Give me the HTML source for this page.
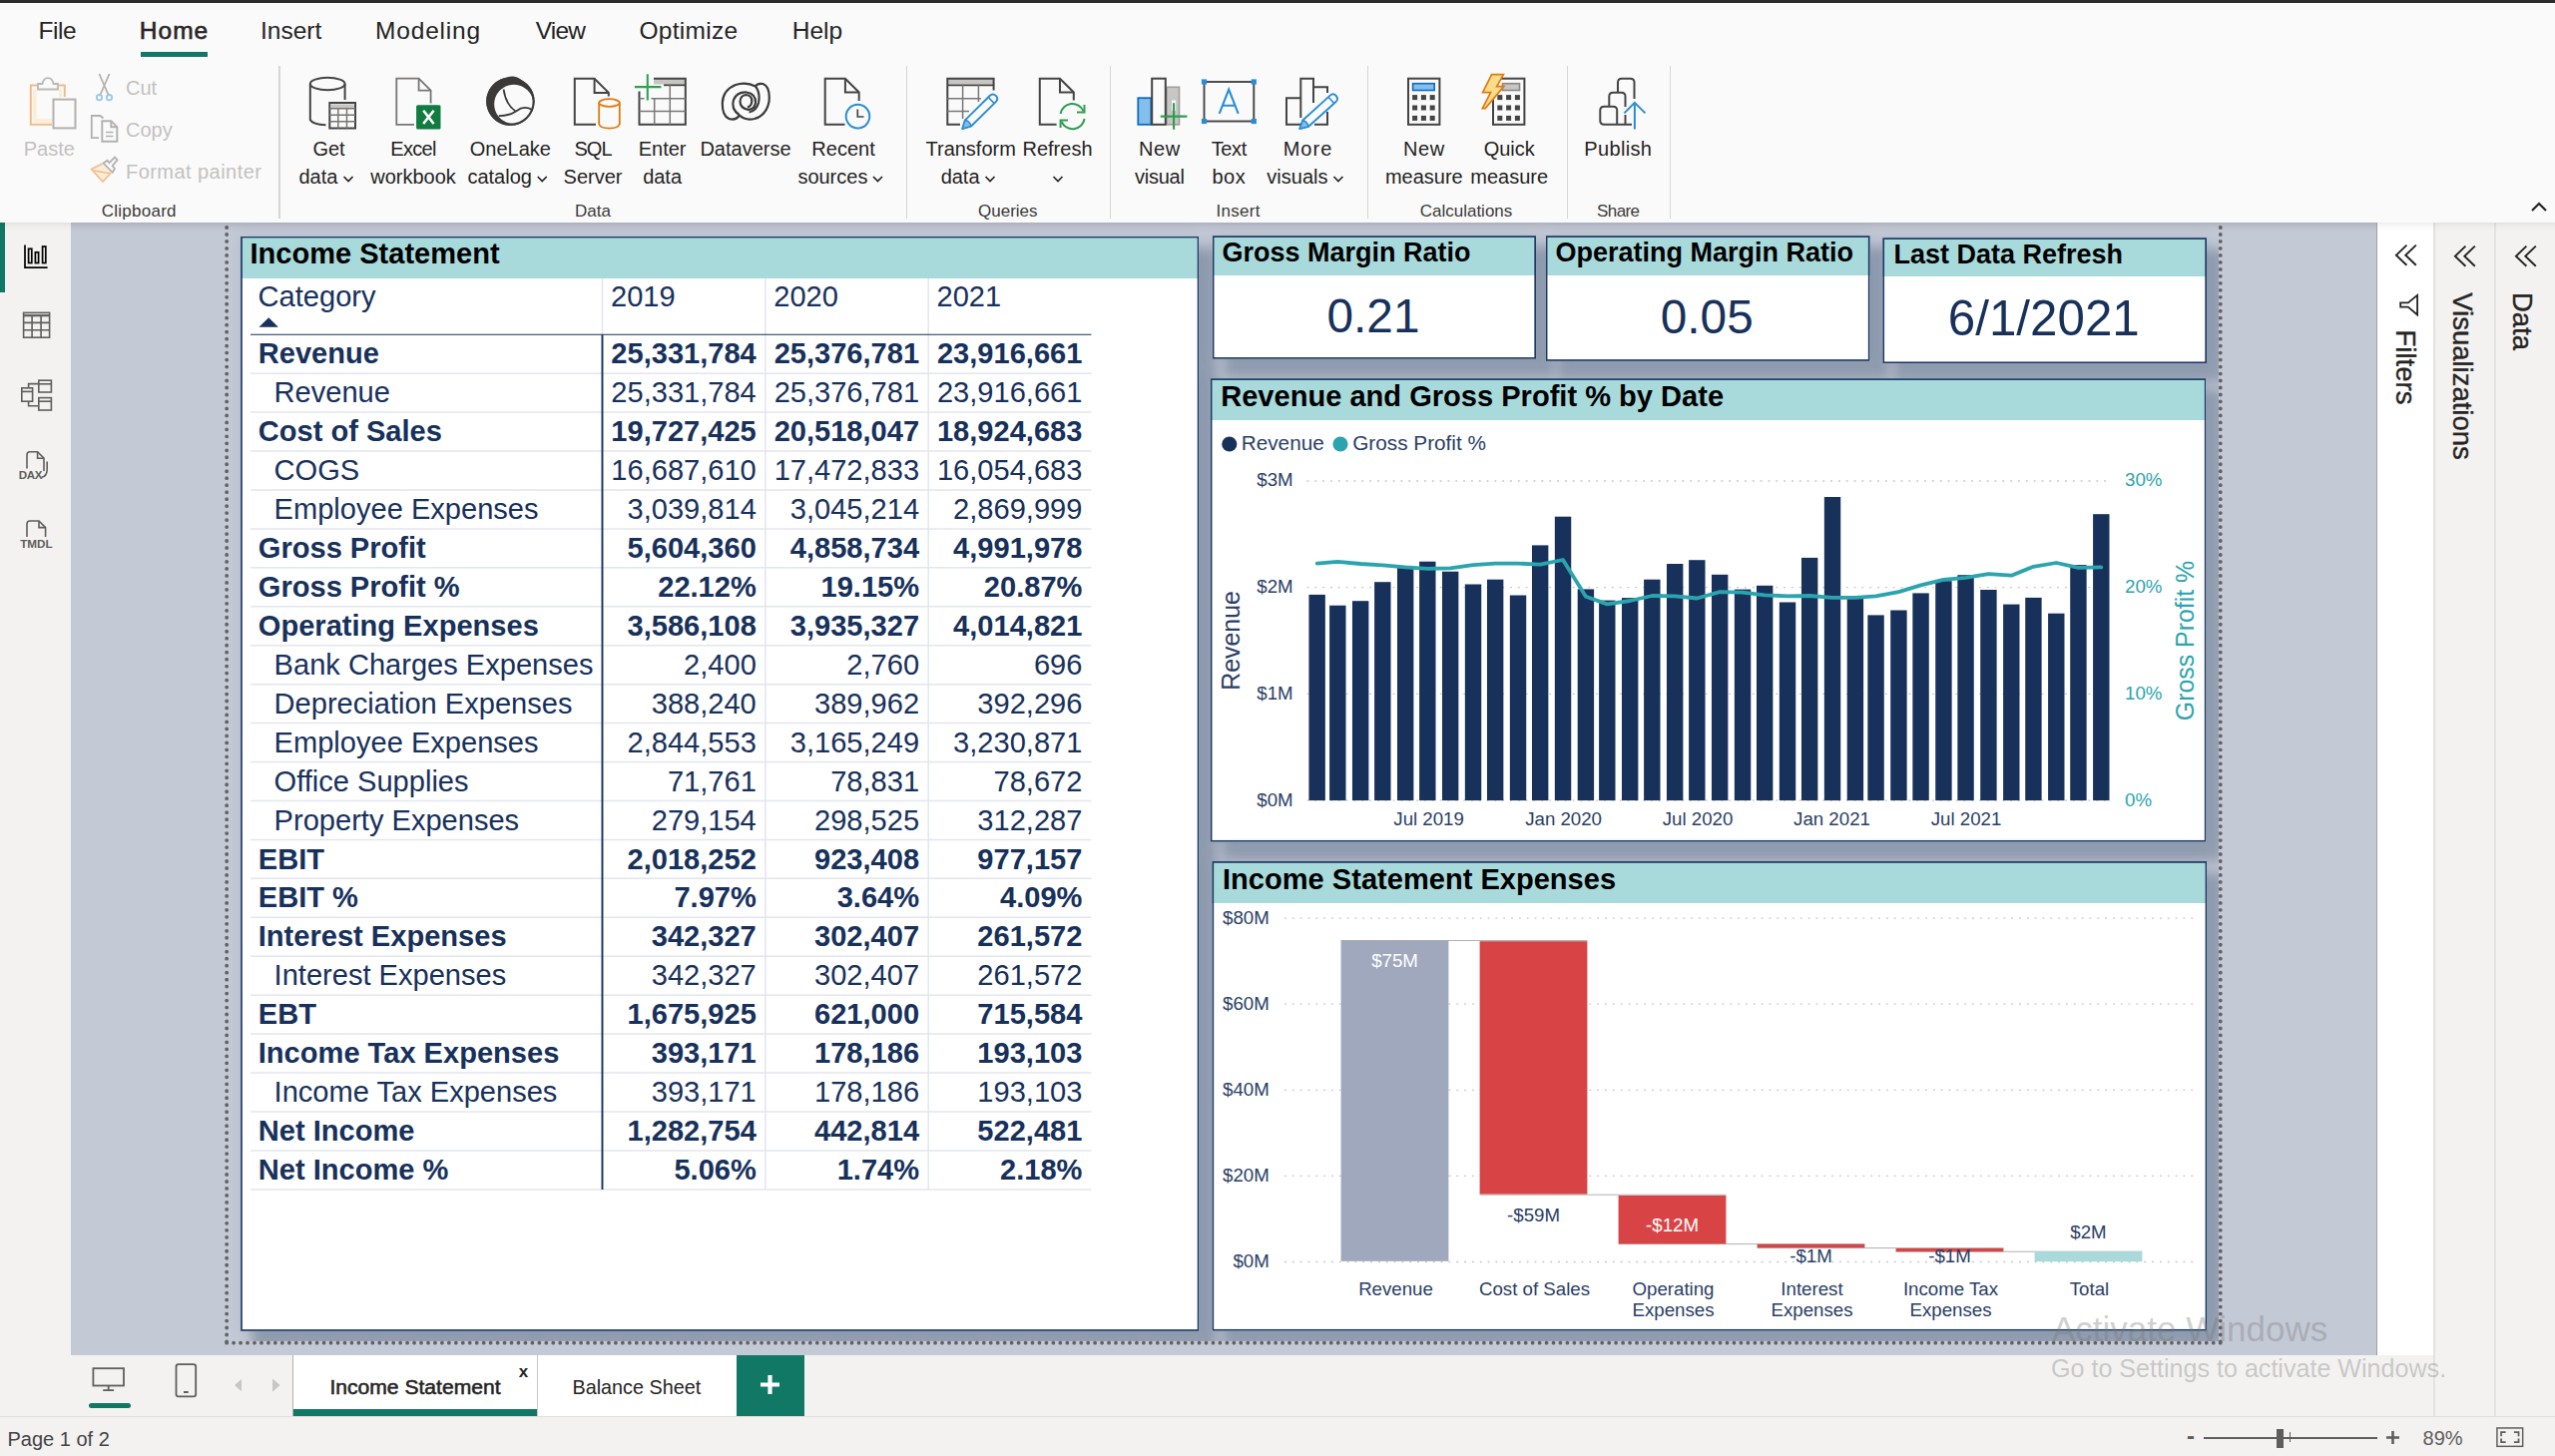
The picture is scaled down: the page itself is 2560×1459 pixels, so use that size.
<!DOCTYPE html><html><head><meta charset="utf-8"><title>Power BI</title><style>
*{box-sizing:border-box;margin:0;padding:0}
html,body{width:2560px;height:1459px;overflow:hidden;background:#f3f2f1;font-family:"Liberation Sans",sans-serif;color:#252423}
.abs{position:absolute}
.t{position:absolute;white-space:nowrap;line-height:1}
#topbar{left:0;top:0;width:2560px;height:3px;background:#2b2b2b}
#ribbon{left:0;top:3px;width:2560px;height:220px;background:#fafafa}
#leftnav{left:0;top:223px;width:71px;height:1196px;background:#f3f2f1}
#canvas{left:71px;top:223px;width:2311px;height:1135px;background:#c4c9d6;overflow:hidden}
#ribshadow{left:71px;top:223px;width:2311px;height:10px;background:linear-gradient(to bottom,rgba(0,0,0,.125),rgba(0,0,0,.045) 42%,rgba(0,0,0,0))}
.ribshadow2{top:223px;height:9px;background:linear-gradient(to bottom,rgba(0,0,0,.065),rgba(0,0,0,.02) 45%,rgba(0,0,0,0))}
#page{left:229px;top:223px;width:1994px;height:1121px;overflow:hidden}
.vis{position:absolute;background:#fff;box-shadow:14.5px 14.5px 11px 4px rgba(96,113,140,.5),0 0 12px 1px rgba(96,113,140,.13)}
.vt{position:absolute;left:0;top:0;right:0;background:#a8dadc}
.vtt{position:absolute;white-space:nowrap;line-height:1;font-weight:bold;color:#000}
.sep{position:absolute;top:66px;width:2px;height:153px;background:#d8d8d8}
.tab{position:absolute;white-space:nowrap;line-height:1;font-size:24.5px;top:19px;color:#252423}
.rl{position:absolute;white-space:nowrap;line-height:1;font-size:20px;color:#252423;text-align:center;transform:translateX(-50%)}
.gl{position:absolute;white-space:nowrap;line-height:1;font-size:17px;color:#444;top:203px;transform:translateX(-50%)}
.dis{color:#c8c6c4}
.navy{color:#1d3557}
</style></head><body>
<div id="canvas" class="abs"></div>
<div id="page" class="abs">
<div class="vis" style="left:12px;top:14px;width:960px;height:1097px"><div class="vt" style="height:41.8px"></div>
<div class="t" style="top:3.39px;font-size:29.07px;color:#000;font-weight:bold;left:9.40px;">Income Statement</div>
<div class="t" style="top:46.09px;font-size:29.07px;color:#17315b;left:17.60px;">Category</div>
<div class="t" style="top:46.09px;font-size:29.07px;color:#17315b;left:371.00px;">2019</div>
<div class="t" style="top:46.09px;font-size:29.07px;color:#17315b;left:534.30px;">2020</div>
<div class="t" style="top:46.09px;font-size:29.07px;color:#17315b;left:697.50px;">2021</div>
<svg class="abs" style="left:18px;top:80px" width="22" height="12" viewBox="0 0 22 12"><path d="M0.5 10.8 L10.2 1.2 L19.9 10.8Z" fill="#17315b"/></svg>
<svg class="abs" style="left:0;top:0" width="960" height="1097" viewBox="241 237 960 1097" fill="none"><line x1="603.5" x2="603.5" y1="279" y2="335.2" stroke="#e3e6ed" stroke-width="1.5"/><line x1="766.9" x2="766.9" y1="279" y2="1191.8799999999999" stroke="#e3e6ed" stroke-width="1.5"/><line x1="930.2" x2="930.2" y1="279" y2="1191.8799999999999" stroke="#e3e6ed" stroke-width="1.5"/><line x1="251" x2="1093.5" y1="374.14" y2="374.14" stroke="#e3e6ed" stroke-width="1.5"/><line x1="251" x2="1093.5" y1="413.08" y2="413.08" stroke="#e3e6ed" stroke-width="1.5"/><line x1="251" x2="1093.5" y1="452.02" y2="452.02" stroke="#e3e6ed" stroke-width="1.5"/><line x1="251" x2="1093.5" y1="490.96" y2="490.96" stroke="#e3e6ed" stroke-width="1.5"/><line x1="251" x2="1093.5" y1="529.90" y2="529.90" stroke="#e3e6ed" stroke-width="1.5"/><line x1="251" x2="1093.5" y1="568.84" y2="568.84" stroke="#e3e6ed" stroke-width="1.5"/><line x1="251" x2="1093.5" y1="607.78" y2="607.78" stroke="#e3e6ed" stroke-width="1.5"/><line x1="251" x2="1093.5" y1="646.72" y2="646.72" stroke="#e3e6ed" stroke-width="1.5"/><line x1="251" x2="1093.5" y1="685.66" y2="685.66" stroke="#e3e6ed" stroke-width="1.5"/><line x1="251" x2="1093.5" y1="724.60" y2="724.60" stroke="#e3e6ed" stroke-width="1.5"/><line x1="251" x2="1093.5" y1="763.54" y2="763.54" stroke="#e3e6ed" stroke-width="1.5"/><line x1="251" x2="1093.5" y1="802.48" y2="802.48" stroke="#e3e6ed" stroke-width="1.5"/><line x1="251" x2="1093.5" y1="841.42" y2="841.42" stroke="#e3e6ed" stroke-width="1.5"/><line x1="251" x2="1093.5" y1="880.36" y2="880.36" stroke="#e3e6ed" stroke-width="1.5"/><line x1="251" x2="1093.5" y1="919.30" y2="919.30" stroke="#e3e6ed" stroke-width="1.5"/><line x1="251" x2="1093.5" y1="958.24" y2="958.24" stroke="#e3e6ed" stroke-width="1.5"/><line x1="251" x2="1093.5" y1="997.18" y2="997.18" stroke="#e3e6ed" stroke-width="1.5"/><line x1="251" x2="1093.5" y1="1036.12" y2="1036.12" stroke="#e3e6ed" stroke-width="1.5"/><line x1="251" x2="1093.5" y1="1075.06" y2="1075.06" stroke="#e3e6ed" stroke-width="1.5"/><line x1="251" x2="1093.5" y1="1114.00" y2="1114.00" stroke="#e3e6ed" stroke-width="1.5"/><line x1="251" x2="1093.5" y1="1152.94" y2="1152.94" stroke="#e3e6ed" stroke-width="1.5"/><line x1="251" x2="1093.5" y1="1191.88" y2="1191.88" stroke="#e3e6ed" stroke-width="1.5"/><line x1="603.5" x2="603.5" y1="335.2" y2="1191.8799999999999" stroke="#17315b" stroke-width="1.9"/><line x1="251" x2="1093.5" y1="335.2" y2="335.2" stroke="#17315b" stroke-width="1.1"/></svg>
<div class="t" style="top:103.29px;font-size:29.07px;color:#17315b;font-weight:bold;left:17.80px;">Revenue</div>
<div class="t" style="top:103.29px;font-size:29.07px;color:#17315b;font-weight:bold;left:516.80px;transform:translateX(-100%);">25,331,784</div>
<div class="t" style="top:103.29px;font-size:29.07px;color:#17315b;font-weight:bold;left:680.10px;transform:translateX(-100%);">25,376,781</div>
<div class="t" style="top:103.29px;font-size:29.07px;color:#17315b;font-weight:bold;left:843.40px;transform:translateX(-100%);">23,916,661</div>
<div class="t" style="top:142.23px;font-size:29.07px;color:#17315b;left:33.60px;">Revenue</div>
<div class="t" style="top:142.23px;font-size:29.07px;color:#17315b;left:516.80px;transform:translateX(-100%);">25,331,784</div>
<div class="t" style="top:142.23px;font-size:29.07px;color:#17315b;left:680.10px;transform:translateX(-100%);">25,376,781</div>
<div class="t" style="top:142.23px;font-size:29.07px;color:#17315b;left:843.40px;transform:translateX(-100%);">23,916,661</div>
<div class="t" style="top:181.17px;font-size:29.07px;color:#17315b;font-weight:bold;left:17.80px;">Cost of Sales</div>
<div class="t" style="top:181.17px;font-size:29.07px;color:#17315b;font-weight:bold;left:516.80px;transform:translateX(-100%);">19,727,425</div>
<div class="t" style="top:181.17px;font-size:29.07px;color:#17315b;font-weight:bold;left:680.10px;transform:translateX(-100%);">20,518,047</div>
<div class="t" style="top:181.17px;font-size:29.07px;color:#17315b;font-weight:bold;left:843.40px;transform:translateX(-100%);">18,924,683</div>
<div class="t" style="top:220.11px;font-size:29.07px;color:#17315b;left:33.60px;">COGS</div>
<div class="t" style="top:220.11px;font-size:29.07px;color:#17315b;left:516.80px;transform:translateX(-100%);">16,687,610</div>
<div class="t" style="top:220.11px;font-size:29.07px;color:#17315b;left:680.10px;transform:translateX(-100%);">17,472,833</div>
<div class="t" style="top:220.11px;font-size:29.07px;color:#17315b;left:843.40px;transform:translateX(-100%);">16,054,683</div>
<div class="t" style="top:259.05px;font-size:29.07px;color:#17315b;left:33.60px;">Employee Expenses</div>
<div class="t" style="top:259.05px;font-size:29.07px;color:#17315b;left:516.80px;transform:translateX(-100%);">3,039,814</div>
<div class="t" style="top:259.05px;font-size:29.07px;color:#17315b;left:680.10px;transform:translateX(-100%);">3,045,214</div>
<div class="t" style="top:259.05px;font-size:29.07px;color:#17315b;left:843.40px;transform:translateX(-100%);">2,869,999</div>
<div class="t" style="top:297.99px;font-size:29.07px;color:#17315b;font-weight:bold;left:17.80px;">Gross Profit</div>
<div class="t" style="top:297.99px;font-size:29.07px;color:#17315b;font-weight:bold;left:516.80px;transform:translateX(-100%);">5,604,360</div>
<div class="t" style="top:297.99px;font-size:29.07px;color:#17315b;font-weight:bold;left:680.10px;transform:translateX(-100%);">4,858,734</div>
<div class="t" style="top:297.99px;font-size:29.07px;color:#17315b;font-weight:bold;left:843.40px;transform:translateX(-100%);">4,991,978</div>
<div class="t" style="top:336.93px;font-size:29.07px;color:#17315b;font-weight:bold;left:17.80px;">Gross Profit %</div>
<div class="t" style="top:336.93px;font-size:29.07px;color:#17315b;font-weight:bold;left:516.80px;transform:translateX(-100%);">22.12%</div>
<div class="t" style="top:336.93px;font-size:29.07px;color:#17315b;font-weight:bold;left:680.10px;transform:translateX(-100%);">19.15%</div>
<div class="t" style="top:336.93px;font-size:29.07px;color:#17315b;font-weight:bold;left:843.40px;transform:translateX(-100%);">20.87%</div>
<div class="t" style="top:375.87px;font-size:29.07px;color:#17315b;font-weight:bold;left:17.80px;">Operating Expenses</div>
<div class="t" style="top:375.87px;font-size:29.07px;color:#17315b;font-weight:bold;left:516.80px;transform:translateX(-100%);">3,586,108</div>
<div class="t" style="top:375.87px;font-size:29.07px;color:#17315b;font-weight:bold;left:680.10px;transform:translateX(-100%);">3,935,327</div>
<div class="t" style="top:375.87px;font-size:29.07px;color:#17315b;font-weight:bold;left:843.40px;transform:translateX(-100%);">4,014,821</div>
<div class="t" style="top:414.81px;font-size:29.07px;color:#17315b;left:33.60px;">Bank Charges Expenses</div>
<div class="t" style="top:414.81px;font-size:29.07px;color:#17315b;left:516.80px;transform:translateX(-100%);">2,400</div>
<div class="t" style="top:414.81px;font-size:29.07px;color:#17315b;left:680.10px;transform:translateX(-100%);">2,760</div>
<div class="t" style="top:414.81px;font-size:29.07px;color:#17315b;left:843.40px;transform:translateX(-100%);">696</div>
<div class="t" style="top:453.75px;font-size:29.07px;color:#17315b;left:33.60px;">Depreciation Expenses</div>
<div class="t" style="top:453.75px;font-size:29.07px;color:#17315b;left:516.80px;transform:translateX(-100%);">388,240</div>
<div class="t" style="top:453.75px;font-size:29.07px;color:#17315b;left:680.10px;transform:translateX(-100%);">389,962</div>
<div class="t" style="top:453.75px;font-size:29.07px;color:#17315b;left:843.40px;transform:translateX(-100%);">392,296</div>
<div class="t" style="top:492.69px;font-size:29.07px;color:#17315b;left:33.60px;">Employee Expenses</div>
<div class="t" style="top:492.69px;font-size:29.07px;color:#17315b;left:516.80px;transform:translateX(-100%);">2,844,553</div>
<div class="t" style="top:492.69px;font-size:29.07px;color:#17315b;left:680.10px;transform:translateX(-100%);">3,165,249</div>
<div class="t" style="top:492.69px;font-size:29.07px;color:#17315b;left:843.40px;transform:translateX(-100%);">3,230,871</div>
<div class="t" style="top:531.63px;font-size:29.07px;color:#17315b;left:33.60px;">Office Supplies</div>
<div class="t" style="top:531.63px;font-size:29.07px;color:#17315b;left:516.80px;transform:translateX(-100%);">71,761</div>
<div class="t" style="top:531.63px;font-size:29.07px;color:#17315b;left:680.10px;transform:translateX(-100%);">78,831</div>
<div class="t" style="top:531.63px;font-size:29.07px;color:#17315b;left:843.40px;transform:translateX(-100%);">78,672</div>
<div class="t" style="top:570.57px;font-size:29.07px;color:#17315b;left:33.60px;">Property Expenses</div>
<div class="t" style="top:570.57px;font-size:29.07px;color:#17315b;left:516.80px;transform:translateX(-100%);">279,154</div>
<div class="t" style="top:570.57px;font-size:29.07px;color:#17315b;left:680.10px;transform:translateX(-100%);">298,525</div>
<div class="t" style="top:570.57px;font-size:29.07px;color:#17315b;left:843.40px;transform:translateX(-100%);">312,287</div>
<div class="t" style="top:609.51px;font-size:29.07px;color:#17315b;font-weight:bold;left:17.80px;">EBIT</div>
<div class="t" style="top:609.51px;font-size:29.07px;color:#17315b;font-weight:bold;left:516.80px;transform:translateX(-100%);">2,018,252</div>
<div class="t" style="top:609.51px;font-size:29.07px;color:#17315b;font-weight:bold;left:680.10px;transform:translateX(-100%);">923,408</div>
<div class="t" style="top:609.51px;font-size:29.07px;color:#17315b;font-weight:bold;left:843.40px;transform:translateX(-100%);">977,157</div>
<div class="t" style="top:648.45px;font-size:29.07px;color:#17315b;font-weight:bold;left:17.80px;">EBIT %</div>
<div class="t" style="top:648.45px;font-size:29.07px;color:#17315b;font-weight:bold;left:516.80px;transform:translateX(-100%);">7.97%</div>
<div class="t" style="top:648.45px;font-size:29.07px;color:#17315b;font-weight:bold;left:680.10px;transform:translateX(-100%);">3.64%</div>
<div class="t" style="top:648.45px;font-size:29.07px;color:#17315b;font-weight:bold;left:843.40px;transform:translateX(-100%);">4.09%</div>
<div class="t" style="top:687.39px;font-size:29.07px;color:#17315b;font-weight:bold;left:17.80px;">Interest Expenses</div>
<div class="t" style="top:687.39px;font-size:29.07px;color:#17315b;font-weight:bold;left:516.80px;transform:translateX(-100%);">342,327</div>
<div class="t" style="top:687.39px;font-size:29.07px;color:#17315b;font-weight:bold;left:680.10px;transform:translateX(-100%);">302,407</div>
<div class="t" style="top:687.39px;font-size:29.07px;color:#17315b;font-weight:bold;left:843.40px;transform:translateX(-100%);">261,572</div>
<div class="t" style="top:726.33px;font-size:29.07px;color:#17315b;left:33.60px;">Interest Expenses</div>
<div class="t" style="top:726.33px;font-size:29.07px;color:#17315b;left:516.80px;transform:translateX(-100%);">342,327</div>
<div class="t" style="top:726.33px;font-size:29.07px;color:#17315b;left:680.10px;transform:translateX(-100%);">302,407</div>
<div class="t" style="top:726.33px;font-size:29.07px;color:#17315b;left:843.40px;transform:translateX(-100%);">261,572</div>
<div class="t" style="top:765.27px;font-size:29.07px;color:#17315b;font-weight:bold;left:17.80px;">EBT</div>
<div class="t" style="top:765.27px;font-size:29.07px;color:#17315b;font-weight:bold;left:516.80px;transform:translateX(-100%);">1,675,925</div>
<div class="t" style="top:765.27px;font-size:29.07px;color:#17315b;font-weight:bold;left:680.10px;transform:translateX(-100%);">621,000</div>
<div class="t" style="top:765.27px;font-size:29.07px;color:#17315b;font-weight:bold;left:843.40px;transform:translateX(-100%);">715,584</div>
<div class="t" style="top:804.21px;font-size:29.07px;color:#17315b;font-weight:bold;left:17.80px;">Income Tax Expenses</div>
<div class="t" style="top:804.21px;font-size:29.07px;color:#17315b;font-weight:bold;left:516.80px;transform:translateX(-100%);">393,171</div>
<div class="t" style="top:804.21px;font-size:29.07px;color:#17315b;font-weight:bold;left:680.10px;transform:translateX(-100%);">178,186</div>
<div class="t" style="top:804.21px;font-size:29.07px;color:#17315b;font-weight:bold;left:843.40px;transform:translateX(-100%);">193,103</div>
<div class="t" style="top:843.15px;font-size:29.07px;color:#17315b;left:33.60px;">Income Tax Expenses</div>
<div class="t" style="top:843.15px;font-size:29.07px;color:#17315b;left:516.80px;transform:translateX(-100%);">393,171</div>
<div class="t" style="top:843.15px;font-size:29.07px;color:#17315b;left:680.10px;transform:translateX(-100%);">178,186</div>
<div class="t" style="top:843.15px;font-size:29.07px;color:#17315b;left:843.40px;transform:translateX(-100%);">193,103</div>
<div class="t" style="top:882.09px;font-size:29.07px;color:#17315b;font-weight:bold;left:17.80px;">Net Income</div>
<div class="t" style="top:882.09px;font-size:29.07px;color:#17315b;font-weight:bold;left:516.80px;transform:translateX(-100%);">1,282,754</div>
<div class="t" style="top:882.09px;font-size:29.07px;color:#17315b;font-weight:bold;left:680.10px;transform:translateX(-100%);">442,814</div>
<div class="t" style="top:882.09px;font-size:29.07px;color:#17315b;font-weight:bold;left:843.40px;transform:translateX(-100%);">522,481</div>
<div class="t" style="top:921.03px;font-size:29.07px;color:#17315b;font-weight:bold;left:17.80px;">Net Income %</div>
<div class="t" style="top:921.03px;font-size:29.07px;color:#17315b;font-weight:bold;left:516.80px;transform:translateX(-100%);">5.06%</div>
<div class="t" style="top:921.03px;font-size:29.07px;color:#17315b;font-weight:bold;left:680.10px;transform:translateX(-100%);">1.74%</div>
<div class="t" style="top:921.03px;font-size:29.07px;color:#17315b;font-weight:bold;left:843.40px;transform:translateX(-100%);">2.18%</div>
<svg class="abs" style="left:0;top:0" width="960" height="1097" viewBox="241 237 960 1097"><rect x="242.00" y="237.50" width="958.60" height="1095.50" fill="none" stroke="#1f3a63" stroke-width="1.72"/></svg></div>
<div class="vis" style="left:986px;top:13px;width:324px;height:124px"><div class="vt" style="height:39.6px"></div>
<div class="t" style="top:3.84px;font-size:27px;color:#000;font-weight:bold;left:9.50px;">Gross Margin Ratio</div>
<div class="t" style="top:56.98px;font-size:47.75px;color:#17315b;left:161.00px;transform:translateX(-50%);">0.21</div>
<svg class="abs" style="left:0;top:0" width="324" height="124" viewBox="1215 236 324 124"><rect x="1215.60" y="237.10" width="322.60" height="121.80" fill="none" stroke="#1f3a63" stroke-width="1.72"/></svg></div>
<div class="vis" style="left:1320px;top:13px;width:325px;height:126px"><div class="vt" style="height:39.6px"></div>
<div class="t" style="top:3.84px;font-size:27px;color:#000;font-weight:bold;left:9.50px;">Operating Margin Ratio</div>
<div class="t" style="top:57.98px;font-size:47.75px;color:#17315b;left:161.25px;transform:translateX(-50%);">0.05</div>
<svg class="abs" style="left:0;top:0" width="325" height="126" viewBox="1549 236 325 126"><rect x="1549.60" y="237.10" width="323.10" height="123.90" fill="none" stroke="#1f3a63" stroke-width="1.72"/></svg></div>
<div class="vis" style="left:1657px;top:15px;width:325px;height:126px"><div class="vt" style="height:39.3px"></div>
<div class="t" style="top:3.94px;font-size:27px;color:#000;font-weight:bold;left:11.50px;">Last Data Refresh</div>
<div class="t" style="top:56.27px;font-size:49.3px;color:#17315b;left:161.80px;transform:translateX(-50%);">6/1/2021</div>
<svg class="abs" style="left:0;top:0" width="325" height="126" viewBox="1886 238 325 126"><rect x="1887.20" y="239.10" width="323.00" height="124.20" fill="none" stroke="#1f3a63" stroke-width="1.72"/></svg></div>
<div class="vis" style="left:984px;top:156px;width:997px;height:465px"><div class="vt" style="height:42.3px"></div>
<div class="t" style="top:3.89px;font-size:29.07px;color:#000;font-weight:bold;left:10.20px;">Revenue and Gross Profit % by Date</div>
<svg class="abs" style="left:0;top:0" width="997" height="465" viewBox="1213 379 997 465"><circle cx="1231.8" cy="445" r="7.6" fill="#17315b"/><circle cx="1343" cy="445" r="7.6" fill="#2ba4ae"/><line x1="1309.5" x2="2114" y1="482" y2="482" stroke="#c8c8c8" stroke-width="1.3" stroke-dasharray="1.9 5.93"/><line x1="1309.5" x2="2114" y1="588.7" y2="588.7" stroke="#c8c8c8" stroke-width="1.3" stroke-dasharray="1.9 5.93"/><line x1="1309.5" x2="2114" y1="695.4" y2="695.4" stroke="#c8c8c8" stroke-width="1.3" stroke-dasharray="1.9 5.93"/><line x1="1309.5" x2="2114" y1="802.1" y2="802.1" stroke="#c8c8c8" stroke-width="1.3" stroke-dasharray="1.9 5.93"/><rect x="1311.45" y="595.9" width="16.4" height="206.2" fill="#17315b"/><rect x="1332.11" y="606.7" width="16.4" height="195.4" fill="#17315b"/><rect x="1354.97" y="602.2" width="16.4" height="199.9" fill="#17315b"/><rect x="1377.11" y="583.2" width="16.4" height="218.9" fill="#17315b"/><rect x="1399.97" y="567.8" width="16.4" height="234.3" fill="#17315b"/><rect x="1422.11" y="562.7" width="16.4" height="239.4" fill="#17315b"/><rect x="1444.97" y="572.7" width="16.4" height="229.4" fill="#17315b"/><rect x="1467.84" y="585.5" width="16.4" height="216.6" fill="#17315b"/><rect x="1489.97" y="580.7" width="16.4" height="221.4" fill="#17315b"/><rect x="1512.84" y="596.5" width="16.4" height="205.6" fill="#17315b"/><rect x="1534.97" y="546.4" width="16.4" height="255.7" fill="#17315b"/><rect x="1557.84" y="517.7" width="16.4" height="284.4" fill="#17315b"/><rect x="1580.71" y="590.4" width="16.4" height="211.7" fill="#17315b"/><rect x="1602.10" y="601.6" width="16.4" height="200.5" fill="#17315b"/><rect x="1624.97" y="599.1" width="16.4" height="203.0" fill="#17315b"/><rect x="1647.10" y="580.7" width="16.4" height="221.4" fill="#17315b"/><rect x="1669.97" y="565.0" width="16.4" height="237.1" fill="#17315b"/><rect x="1692.10" y="561.2" width="16.4" height="240.9" fill="#17315b"/><rect x="1714.97" y="575.8" width="16.4" height="226.3" fill="#17315b"/><rect x="1737.84" y="590.6" width="16.4" height="211.5" fill="#17315b"/><rect x="1759.97" y="586.8" width="16.4" height="215.3" fill="#17315b"/><rect x="1782.84" y="603.5" width="16.4" height="198.6" fill="#17315b"/><rect x="1804.97" y="558.9" width="16.4" height="243.2" fill="#17315b"/><rect x="1827.84" y="498.0" width="16.4" height="304.1" fill="#17315b"/><rect x="1850.71" y="598.8" width="16.4" height="203.3" fill="#17315b"/><rect x="1871.36" y="616.4" width="16.4" height="185.7" fill="#17315b"/><rect x="1894.23" y="611.5" width="16.4" height="190.6" fill="#17315b"/><rect x="1916.36" y="594.4" width="16.4" height="207.7" fill="#17315b"/><rect x="1939.23" y="582.2" width="16.4" height="219.9" fill="#17315b"/><rect x="1961.36" y="576.2" width="16.4" height="225.9" fill="#17315b"/><rect x="1984.23" y="591.0" width="16.4" height="211.1" fill="#17315b"/><rect x="2007.10" y="605.6" width="16.4" height="196.5" fill="#17315b"/><rect x="2029.23" y="598.9" width="16.4" height="203.2" fill="#17315b"/><rect x="2052.10" y="614.7" width="16.4" height="187.4" fill="#17315b"/><rect x="2074.23" y="566.1" width="16.4" height="236.0" fill="#17315b"/><rect x="2097.10" y="515.2" width="16.4" height="286.9" fill="#17315b"/><polyline points="1319.7,564.6 1340.3,562.9 1363.2,565.0 1385.3,566.3 1408.2,568.4 1430.3,569.9 1453.2,569.3 1476.0,566.1 1498.2,564.6 1521.0,564.6 1543.2,565.7 1566.0,561.0 1588.9,597.8 1610.3,605.4 1633.2,602.0 1655.3,597.0 1678.2,597.4 1700.3,599.5 1723.2,593.1 1746.0,593.6 1768.2,596.3 1791.0,597.4 1813.2,597.0 1836.0,598.9 1858.9,598.9 1879.6,597.4 1902.4,593.1 1924.6,586.4 1947.4,580.9 1969.6,578.8 1992.4,575.2 2015.3,576.7 2037.4,567.8 2060.3,564.0 2082.4,568.8 2105.3,568.4" fill="none" stroke="#2ba4ae" stroke-width="3.8" stroke-linejoin="round" stroke-linecap="round"/></svg>
<div class="t" style="top:54.63px;font-size:20.76px;color:#2a4066;left:30.70px;">Revenue</div>
<div class="t" style="top:54.63px;font-size:20.76px;color:#2a4066;left:142.20px;">Gross Profit %</div>
<div class="t" style="top:93.49px;font-size:18.68px;color:#2a4066;left:46.30px;">$3M</div>
<div class="t" style="top:93.49px;font-size:18.68px;color:#2ba4ae;left:916.00px;">30%</div>
<div class="t" style="top:200.19px;font-size:18.68px;color:#2a4066;left:46.30px;">$2M</div>
<div class="t" style="top:200.19px;font-size:18.68px;color:#2ba4ae;left:916.00px;">20%</div>
<div class="t" style="top:306.89px;font-size:18.68px;color:#2a4066;left:46.30px;">$1M</div>
<div class="t" style="top:306.89px;font-size:18.68px;color:#2ba4ae;left:916.00px;">10%</div>
<div class="t" style="top:413.59px;font-size:18.68px;color:#2a4066;left:46.30px;">$0M</div>
<div class="t" style="top:413.59px;font-size:18.68px;color:#2ba4ae;left:916.00px;">0%</div>
<div class="t" style="top:432.99px;font-size:18.68px;color:#2a4066;left:218.60px;transform:translateX(-50%);">Jul 2019</div>
<div class="t" style="top:432.99px;font-size:18.68px;color:#2a4066;left:353.60px;transform:translateX(-50%);">Jan 2020</div>
<div class="t" style="top:432.99px;font-size:18.68px;color:#2a4066;left:488.00px;transform:translateX(-50%);">Jul 2020</div>
<div class="t" style="top:432.99px;font-size:18.68px;color:#2a4066;left:622.50px;transform:translateX(-50%);">Jan 2021</div>
<div class="t" style="top:432.99px;font-size:18.68px;color:#2a4066;left:757.00px;transform:translateX(-50%);">Jul 2021</div>
<div class="t" style="left:19.90000000000009px;top:262.79999999999995px;font-size:24.9px;color:#2a4066;transform:translate(-50%,-50%) rotate(-90deg)">Revenue</div>
<div class="t" style="left:976px;top:263px;font-size:24.9px;color:#2ba4ae;transform:translate(-50%,-50%) rotate(-90deg)">Gross Profit %</div>
<svg class="abs" style="left:0;top:0" width="997" height="465" viewBox="1213 379 997 465"><rect x="1213.60" y="380.10" width="996.10" height="462.70" fill="none" stroke="#1f3a63" stroke-width="1.72"/></svg></div>
<div class="vis" style="left:985px;top:640px;width:997px;height:471px"><div class="vt" style="height:42.4px"></div>
<div class="t" style="top:4.09px;font-size:29.07px;color:#000;font-weight:bold;left:11.00px;">Income Statement Expenses</div>
<svg class="abs" style="left:0;top:0" width="997" height="471" viewBox="1214 863 997 471"><line x1="1287" x2="2201" y1="1264.5" y2="1264.5" stroke="#c8c8c8" stroke-width="1.3" stroke-dasharray="1.9 5.93"/><line x1="1287" x2="2201" y1="1178.4" y2="1178.4" stroke="#c8c8c8" stroke-width="1.3" stroke-dasharray="1.9 5.93"/><line x1="1287" x2="2201" y1="1092.3" y2="1092.3" stroke="#c8c8c8" stroke-width="1.3" stroke-dasharray="1.9 5.93"/><line x1="1287" x2="2201" y1="1006.2" y2="1006.2" stroke="#c8c8c8" stroke-width="1.3" stroke-dasharray="1.9 5.93"/><line x1="1287" x2="2201" y1="920.1" y2="920.1" stroke="#c8c8c8" stroke-width="1.3" stroke-dasharray="1.9 5.93"/><line x1="1343.6" x2="1590.4" y1="942.5" y2="942.5" stroke="#b3b0ad" stroke-width="1"/><line x1="1482.6" x2="1729.4" y1="1197.2" y2="1197.2" stroke="#b3b0ad" stroke-width="1"/><line x1="1621.6" x2="1868.4" y1="1246.6" y2="1246.6" stroke="#b3b0ad" stroke-width="1"/><line x1="1760.6" x2="2007.4" y1="1250.6" y2="1250.6" stroke="#b3b0ad" stroke-width="1"/><line x1="1899.6" x2="2146.4" y1="1254.2" y2="1254.2" stroke="#b3b0ad" stroke-width="1"/><rect x="1343.6" y="942.3" width="107.8" height="321.5" fill="#a0a8bd"/><rect x="1482.6" y="943.2" width="107.8" height="253.4" fill="#d84446"/><rect x="1621.6" y="1198" width="107.8" height="48.4" fill="#d84446"/><rect x="1760.6" y="1246.8" width="107.8" height="3.5" fill="#d84446"/><rect x="1899.6" y="1251" width="107.8" height="3.2" fill="#d84446"/><rect x="2038.6" y="1254.2" width="107.8" height="10.0" fill="#a8dadc"/></svg>
<div class="t" style="top:391.99px;font-size:18.68px;color:#2a4066;left:57.80px;transform:translateX(-100%);">$0M</div>
<div class="t" style="top:305.89px;font-size:18.68px;color:#2a4066;left:57.80px;transform:translateX(-100%);">$20M</div>
<div class="t" style="top:219.79px;font-size:18.68px;color:#2a4066;left:57.80px;transform:translateX(-100%);">$40M</div>
<div class="t" style="top:133.69px;font-size:18.68px;color:#2a4066;left:57.80px;transform:translateX(-100%);">$60M</div>
<div class="t" style="top:47.59px;font-size:18.68px;color:#2a4066;left:57.80px;transform:translateX(-100%);">$80M</div>
<div class="t" style="top:90.99px;font-size:18.68px;color:#fff;left:183.50px;transform:translateX(-50%);">$75M</div>
<div class="t" style="top:345.69px;font-size:18.68px;color:#2a4066;left:322.50px;transform:translateX(-50%);">-$59M</div>
<div class="t" style="top:355.79px;font-size:18.68px;color:#fff;left:461.50px;transform:translateX(-50%);">-$12M</div>
<div class="t" style="top:386.89px;font-size:18.68px;color:#2a4066;left:600.50px;transform:translateX(-50%);">-$1M</div>
<div class="t" style="top:386.89px;font-size:18.68px;color:#2a4066;left:739.50px;transform:translateX(-50%);">-$1M</div>
<div class="t" style="top:362.59px;font-size:18.68px;color:#2a4066;left:878.50px;transform:translateX(-50%);">$2M</div>
<div class="t" style="top:419.99px;font-size:18.68px;color:#2a4066;left:184.50px;transform:translateX(-50%);">Revenue</div>
<div class="t" style="top:419.99px;font-size:18.68px;color:#2a4066;left:323.50px;transform:translateX(-50%);">Cost of Sales</div>
<div class="t" style="top:419.99px;font-size:18.68px;color:#2a4066;left:462.50px;transform:translateX(-50%);">Operating</div>
<div class="t" style="top:440.69px;font-size:18.68px;color:#2a4066;left:462.50px;transform:translateX(-50%);">Expenses</div>
<div class="t" style="top:419.99px;font-size:18.68px;color:#2a4066;left:601.50px;transform:translateX(-50%);">Interest</div>
<div class="t" style="top:440.69px;font-size:18.68px;color:#2a4066;left:601.50px;transform:translateX(-50%);">Expenses</div>
<div class="t" style="top:419.99px;font-size:18.68px;color:#2a4066;left:740.50px;transform:translateX(-50%);">Income Tax</div>
<div class="t" style="top:440.69px;font-size:18.68px;color:#2a4066;left:740.50px;transform:translateX(-50%);">Expenses</div>
<div class="t" style="top:419.99px;font-size:18.68px;color:#2a4066;left:879.50px;transform:translateX(-50%);">Total</div>
<svg class="abs" style="left:0;top:0" width="997" height="471" viewBox="1214 863 997 471"><rect x="1215.30" y="863.90" width="995.20" height="468.90" fill="none" stroke="#1f3a63" stroke-width="1.72"/></svg></div>
</div>
<svg class="abs" style="left:220px;top:220px" width="2012" height="1132" viewBox="220 220 2012 1132" fill="none" stroke="#646260" stroke-width="3.8" stroke-linecap="round"><path d="M227.15 228 V1345" stroke-dasharray="0.01 6.968"/><path d="M2224.8 228 V1345" stroke-dasharray="0.01 6.968"/><path d="M227.15 1345.7 H2225" stroke-dasharray="0.01 6.95"/></svg>
<div id="ribshadow" class="abs"></div>
<div id="topbar" class="abs"></div>
<div id="ribbon" class="abs"></div>
<div class="t" style="top:19.26px;font-size:24.5px;color:#252423;left:57.30px;transform:translateX(-50%);letter-spacing:-0.45px;">File</div>
<div class="t" style="top:19.26px;font-size:24.5px;color:#252423;left:174.50px;transform:translateX(-50%);letter-spacing:1.0px;-webkit-text-stroke:.6px #252423;">Home</div>
<div class="t" style="top:19.26px;font-size:24.5px;color:#252423;left:291.70px;transform:translateX(-50%);letter-spacing:0px;">Insert</div>
<div class="t" style="top:19.26px;font-size:24.5px;color:#252423;left:429.00px;transform:translateX(-50%);letter-spacing:0.8px;">Modeling</div>
<div class="t" style="top:19.26px;font-size:24.5px;color:#252423;left:561.40px;transform:translateX(-50%);letter-spacing:-0.9px;">View</div>
<div class="t" style="top:19.26px;font-size:24.5px;color:#252423;left:690.00px;transform:translateX(-50%);letter-spacing:0.3px;">Optimize</div>
<div class="t" style="top:19.26px;font-size:24.5px;color:#252423;left:818.90px;transform:translateX(-50%);letter-spacing:0px;">Help</div>
<div class="abs" style="left:141.00px;top:52.00px;width:67.00px;height:5.00px;background:#117865;"></div>
<div class="abs" style="left:279.00px;top:66.00px;width:1.60px;height:153.00px;background:#d6d6d6;"></div>
<div class="abs" style="left:907.50px;top:66.00px;width:1.60px;height:153.00px;background:#d6d6d6;"></div>
<div class="abs" style="left:1111.50px;top:66.00px;width:1.60px;height:153.00px;background:#d6d6d6;"></div>
<div class="abs" style="left:1369.50px;top:66.00px;width:1.60px;height:153.00px;background:#d6d6d6;"></div>
<div class="abs" style="left:1569.50px;top:66.00px;width:1.60px;height:153.00px;background:#d6d6d6;"></div>
<div class="abs" style="left:1672.50px;top:66.00px;width:1.60px;height:153.00px;background:#d6d6d6;"></div>
<div class="t" style="top:202.91px;font-size:17px;color:#3b3a39;left:139.30px;transform:translateX(-50%);letter-spacing:0.25px;">Clipboard</div>
<div class="t" style="top:202.91px;font-size:17px;color:#3b3a39;left:594.00px;transform:translateX(-50%);letter-spacing:0px;">Data</div>
<div class="t" style="top:202.91px;font-size:17px;color:#3b3a39;left:1009.80px;transform:translateX(-50%);letter-spacing:0px;">Queries</div>
<div class="t" style="top:202.91px;font-size:17px;color:#3b3a39;left:1240.70px;transform:translateX(-50%);letter-spacing:0.3px;">Insert</div>
<div class="t" style="top:202.91px;font-size:17px;color:#3b3a39;left:1469.00px;transform:translateX(-50%);letter-spacing:0px;">Calculations</div>
<div class="t" style="top:202.91px;font-size:17px;color:#3b3a39;left:1621.30px;transform:translateX(-50%);letter-spacing:-0.6px;">Share</div>
<div class="t" style="top:138.57px;font-size:20px;color:#c3c1bf;left:49.30px;transform:translateX(-50%);">Paste</div>
<div class="t" style="top:78.07px;font-size:20px;color:#c3c1bf;left:126.00px;">Cut</div>
<div class="t" style="top:120.07px;font-size:20px;color:#c3c1bf;left:126.00px;">Copy</div>
<div class="t" style="top:162.07px;font-size:20px;color:#c3c1bf;left:126.00px;letter-spacing:.45px;">Format painter</div>
<div class="t" style="top:138.57px;font-size:20px;color:#252423;left:329.50px;transform:translateX(-50%);letter-spacing:0px;">Get</div>
<div class="t" style="top:166.57px;font-size:20px;color:#252423;left:326.90px;transform:translateX(-50%);letter-spacing:0px;">data<svg width="11" height="7" viewBox="0 0 11 7" style="margin-left:5px;vertical-align:1px"><path d="M1 1 L5.5 5.5 L10 1" fill="none" stroke="#252423" stroke-width="1.7"/></svg></div>
<div class="t" style="top:138.57px;font-size:20px;color:#252423;left:414.00px;transform:translateX(-50%);letter-spacing:-0.7px;">Excel</div>
<div class="t" style="top:166.57px;font-size:20px;color:#252423;left:414.00px;transform:translateX(-50%);letter-spacing:0px;">workbook</div>
<div class="t" style="top:138.57px;font-size:20px;color:#252423;left:511.30px;transform:translateX(-50%);letter-spacing:0px;">OneLake</div>
<div class="t" style="top:166.57px;font-size:20px;color:#252423;left:508.70px;transform:translateX(-50%);letter-spacing:0px;">catalog<svg width="11" height="7" viewBox="0 0 11 7" style="margin-left:5px;vertical-align:1px"><path d="M1 1 L5.5 5.5 L10 1" fill="none" stroke="#252423" stroke-width="1.7"/></svg></div>
<div class="t" style="top:138.57px;font-size:20px;color:#252423;left:594.00px;transform:translateX(-50%);letter-spacing:-1.0px;">SQL</div>
<div class="t" style="top:166.57px;font-size:20px;color:#252423;left:594.00px;transform:translateX(-50%);letter-spacing:0px;">Server</div>
<div class="t" style="top:138.57px;font-size:20px;color:#252423;left:663.60px;transform:translateX(-50%);letter-spacing:0px;">Enter</div>
<div class="t" style="top:166.57px;font-size:20px;color:#252423;left:663.60px;transform:translateX(-50%);letter-spacing:0px;">data</div>
<div class="t" style="top:138.57px;font-size:20px;color:#252423;left:747.00px;transform:translateX(-50%);letter-spacing:0px;">Dataverse</div>
<div class="t" style="top:138.57px;font-size:20px;color:#252423;left:845.00px;transform:translateX(-50%);letter-spacing:0px;">Recent</div>
<div class="t" style="top:166.57px;font-size:20px;color:#252423;left:842.40px;transform:translateX(-50%);letter-spacing:0px;">sources<svg width="11" height="7" viewBox="0 0 11 7" style="margin-left:5px;vertical-align:1px"><path d="M1 1 L5.5 5.5 L10 1" fill="none" stroke="#252423" stroke-width="1.7"/></svg></div>
<div class="t" style="top:138.57px;font-size:20px;color:#252423;left:972.70px;transform:translateX(-50%);letter-spacing:0px;">Transform</div>
<div class="t" style="top:166.57px;font-size:20px;color:#252423;left:970.10px;transform:translateX(-50%);letter-spacing:0px;">data<svg width="11" height="7" viewBox="0 0 11 7" style="margin-left:5px;vertical-align:1px"><path d="M1 1 L5.5 5.5 L10 1" fill="none" stroke="#252423" stroke-width="1.7"/></svg></div>
<div class="t" style="top:138.57px;font-size:20px;color:#252423;left:1059.50px;transform:translateX(-50%);letter-spacing:0px;">Refresh</div>
<div class="t" style="top:166.57px;font-size:20px;color:#252423;left:1059.50px;transform:translateX(-50%);"><svg width="11" height="7" viewBox="0 0 11 7" style="vertical-align:1px"><path d="M1 1 L5.5 5.5 L10 1" fill="none" stroke="#252423" stroke-width="1.7"/></svg></div>
<div class="t" style="top:138.57px;font-size:20px;color:#252423;left:1161.80px;transform:translateX(-50%);letter-spacing:0.6px;">New</div>
<div class="t" style="top:166.57px;font-size:20px;color:#252423;left:1161.80px;transform:translateX(-50%);letter-spacing:-0.25px;">visual</div>
<div class="t" style="top:138.57px;font-size:20px;color:#252423;left:1231.30px;transform:translateX(-50%);letter-spacing:-0.4px;">Text</div>
<div class="t" style="top:166.57px;font-size:20px;color:#252423;left:1231.30px;transform:translateX(-50%);letter-spacing:0.5px;">box</div>
<div class="t" style="top:138.57px;font-size:20px;color:#252423;left:1310.50px;transform:translateX(-50%);letter-spacing:1.0px;">More</div>
<div class="t" style="top:166.57px;font-size:20px;color:#252423;left:1307.90px;transform:translateX(-50%);letter-spacing:0px;">visuals<svg width="11" height="7" viewBox="0 0 11 7" style="margin-left:5px;vertical-align:1px"><path d="M1 1 L5.5 5.5 L10 1" fill="none" stroke="#252423" stroke-width="1.7"/></svg></div>
<div class="t" style="top:138.57px;font-size:20px;color:#252423;left:1426.80px;transform:translateX(-50%);letter-spacing:0.6px;">New</div>
<div class="t" style="top:166.57px;font-size:20px;color:#252423;left:1426.80px;transform:translateX(-50%);letter-spacing:0px;">measure</div>
<div class="t" style="top:138.57px;font-size:20px;color:#252423;left:1512.20px;transform:translateX(-50%);letter-spacing:0px;">Quick</div>
<div class="t" style="top:166.57px;font-size:20px;color:#252423;left:1512.20px;transform:translateX(-50%);letter-spacing:0px;">measure</div>
<div class="t" style="top:138.57px;font-size:20px;color:#252423;left:1621.30px;transform:translateX(-50%);letter-spacing:0.35px;">Publish</div>
<svg class="abs" style="left:2534px;top:200px" width="20" height="14" viewBox="0 0 20 14"><path d="M3 11 L10 4 L17 11" fill="none" stroke="#252423" stroke-width="2.2"/></svg>
<svg class="abs" style="left:0;top:0" width="1700" height="222" viewBox="0 0 1700 222" fill="none">
<path d="M37 85.5 H30.8 V124.8 H52" stroke="#f1bb8c" stroke-width="2"/><path d="M59 85.5 H64.8 V97" stroke="#f1bb8c" stroke-width="2"/>
<path d="M34.8 89.6 V120.9 H52" stroke="#fbeed4" stroke-width="3.6"/><path d="M60.6 89.6 V97" stroke="#fbeed4" stroke-width="3.2"/>
<path d="M38 89.5 V84 H42.5 Q43.5 78.2 48 78.2 Q52.5 78.2 53.5 84 H58 V89.5 Z" stroke="#bab8b6" stroke-width="1.8" fill="#fafafa"/>
<rect x="53.5" y="99.6" width="22" height="28.8" stroke="#b3b1af" stroke-width="2" fill="#fafafa"/>
<path d="M99.4 74 L108.6 95 M109.6 74 L100.4 95" stroke="#b3b1af" stroke-width="1.8"/><circle cx="99.5" cy="97.7" r="2.7" stroke="#9cc8e6" stroke-width="1.8"/><circle cx="109.5" cy="97.7" r="2.7" stroke="#9cc8e6" stroke-width="1.8"/>
<path d="M99 138.2 H91.8 V116 H100.5 L103.5 118.5" stroke="#b3b1af" stroke-width="1.8"/>
<path d="M102.3 121.2 H111.3 L117.3 127.2 V141.7 H102.3 Z M111.3 121.2 V127.2 H117.3" stroke="#b3b1af" stroke-width="1.9"/><path d="M106 132.6 H113.5 M106 136.6 H113.5" stroke="#b3b1af" stroke-width="1.5"/>
<path d="M102.5 164 L91.5 169.5 L103 182 L111 173.5" stroke="#f1bb8c" stroke-width="1.6" fill="#fbeed4"/><path d="M94 171 Q101 172 111 174" stroke="#f1bb8c" stroke-width="1.4"/>
<path d="M103.5 163.5 L107.5 160.8 L109.5 163.2 L115 157.6 L117.6 160.2 L112.6 166.2 L115 169 L112.6 172.8 Z" stroke="#b3b1af" stroke-width="1.8" fill="#fafafa"/>
<ellipse cx="328.2" cy="84" rx="17.4" ry="6.2" stroke="#444" stroke-width="2"/><path d="M310.8 84 V120 Q313 124.5 326.5 125.3 M345.6 84 V100" stroke="#444" stroke-width="2"/>
<rect x="330.3" y="103" width="25.7" height="25.5" fill="#fafafa" stroke="#444" stroke-width="2"/><rect x="331.8" y="104.4" width="22.8" height="3.6" fill="#c8c6c4"/>
<path d="M330.3 108.8 H356 M330.3 115.2 H356 M330.3 121.8 H356 M338.8 108.8 V128.5 M347.5 108.8 V128.5" stroke="#797775" stroke-width="1.5"/>
<path d="M415 124.8 H397.3 V78.7 H419.6 L431.6 90.7 V103.5" stroke="#797775" stroke-width="1.8"/><path d="M419.6 78.7 V90.7 H431.6" stroke="#797775" stroke-width="1.8"/>
<rect x="417.1" y="105.2" width="24.4" height="24.4" rx="1.5" fill="#107c41"/><path d="M424.2 110.8 L434.6 124 M434.6 110.8 L424.2 124" stroke="#fff" stroke-width="2.6"/>
<circle cx="511.4" cy="101.6" r="23.2" stroke="#3b3a39" stroke-width="2" fill="none"/><path fill-rule="evenodd" d="M511.4 77.4 a24.2 24.2 0 1 0 0.01 0 Z M514.8 84.8 a19.6 19.6 0 1 0 0.01 0 Z" fill="#3b3a39"/>
<path d="M500.5 84 Q505 76.5 514 76.6 Q522 77.2 524.5 84.5 Q515 81.5 506 86 Z" fill="#3b3a39"/>
<path d="M504.6 89.5 Q506.5 104.5 517 111.8 M499.8 116.2 Q510.5 116 517.5 111.2 Q525 105.2 533.5 110.2" stroke="#3b3a39" stroke-width="1.8" fill="none"/>
<path d="M597 124.80000000000001 H575.8 V78.7 H595.5999999999999 L609.8 92.9 V96.5" fill="none" stroke="#444" stroke-width="2"/><path d="M595.5999999999999 78.7 V92.9 H609.8" fill="none" stroke="#444" stroke-width="2"/>
<ellipse cx="610.5" cy="103" rx="10.3" ry="3.8" stroke="#e07a10" stroke-width="1.8" fill="#fafafa"/><path d="M600.2 103 V124.5 Q602 128.6 610.5 128.6 Q619 128.6 620.8 124.5 V103" stroke="#e07a10" stroke-width="1.8" fill="none"/>
<rect x="655" y="78.2" width="31.5" height="6.3" fill="#c8c6c4"/>
<path d="M655 78.7 H686.8 V124.8 H640.5 V91.5" stroke="#444" stroke-width="2"/><path d="M665 85.3 H686.8" stroke="#444" stroke-width="1.8"/>
<path d="M640.5 98.8 H645.5 M652.5 98.8 H686.8 M640.5 111.5 H686.8 M655.7 99 V124.8 M671.3 85.3 V124.8" stroke="#797775" stroke-width="1.5"/>
<path d="M648.8 74.2 V100.6 M635.9 87.1 H662.4" stroke="#2ea24f" stroke-width="2.1"/>
<g stroke="#3b3a39" stroke-width="2.2"><path d="M757 86.5 Q747.5 81.5 737 85 Q724.5 90 723.8 103 Q723.5 116 730.5 119 Q737 121 741 115.5"/><path d="M741 115.5 Q732 109 735 100 Q738.5 92 748 92.5 Q757.5 94 757 103 Q756 110 749.5 109.8 Q741.5 108.5 741.5 101.5 Q742 95.5 747.5 95 Q753.5 95.5 753.3 101.5 Q753 106.5 749 107.3"/><path d="M741 115.5 Q746.5 121 756 119 Q768 115.5 770.5 102 Q772 87 764.5 84 Q759 83 757 86.5 Q762 93 760 103 Q758 111 750.5 112.5"/></g>
<path d="M846.5 124.80000000000001 H826.7 V78.7 H846.9000000000001 L860.7 92.5 V101" fill="none" stroke="#444" stroke-width="2"/><path d="M846.9000000000001 78.7 V92.5 H860.7" fill="none" stroke="#444" stroke-width="2"/>
<circle cx="859.5" cy="116.6" r="11.8" stroke="#2a8dd4" stroke-width="2" fill="#fafafa"/><path d="M859.3 109.5 V117 H865.5" stroke="#444" stroke-width="1.7"/>
<rect x="949.3" y="78.2" width="46.3" height="6.3" fill="#c8c6c4"/>
<path d="M962 124.8 H949.3 V78.7 H995.6 V90.5" stroke="#444" stroke-width="2"/><path d="M949.3 85.3 H995.6" stroke="#444" stroke-width="1.8"/>
<path d="M949.3 98.8 H983 M949.3 111.5 H971 M964.6 85.3 V119 M980.4 85.3 V102" stroke="#797775" stroke-width="1.5"/>
<g transform="translate(964.3 129) rotate(-44.55585556688807)"><path d="M0 0 L8 -4.3 L42.609757727924844 -4.3 Q47.109757727924844 -4.3 47.109757727924844 0 Q47.109757727924844 4.3 42.609757727924844 4.3 L8 4.3 Z" fill="#fafafa" stroke="#2a8dd4" stroke-width="1.9" stroke-linejoin="round"/><path d="M0 0 L8 -4.3 Q10.5 0 8 4.3 Z" fill="#83beec" stroke="#2a8dd4" stroke-width="1.5" stroke-linejoin="round"/><path d="M40.609757727924844 -4.3 V4.3" stroke="#2a8dd4" stroke-width="1.6"/></g>
<path d="M1058.6 124.80000000000001 H1041.8 V78.7 H1062.0 L1075.8 92.5 V100.6" fill="none" stroke="#444" stroke-width="2"/><path d="M1062.0 78.7 V92.5 H1075.8" fill="none" stroke="#444" stroke-width="2"/>
<path d="M1062.6 114 A12 12 0 0 1 1085.5 111.3 M1086.6 119 A12 12 0 0 1 1063.7 122" stroke="#2e9d4e" stroke-width="2"/><path d="M1079 112.6 H1086.5 V105 M1070 120.5 H1062.6 V128" stroke="#2e9d4e" stroke-width="2"/>
<rect x="1169" y="87.3" width="12.5" height="37.5" fill="#c8c6c4" stroke="#a19f9d" stroke-width="1.6"/>
<rect x="1140.3" y="98.2" width="13" height="26.6" fill="#83beec" stroke="#0f6cbd" stroke-width="1.8"/>
<rect x="1154.2" y="78.7" width="13.6" height="46.1" fill="#fafafa" stroke="#444" stroke-width="2"/>
<path d="M1176.1 100.5 V111 " stroke="#fafafa" stroke-width="4"/><path d="M1176.1 103.2 V129.8 M1162.8 116.6 H1189.4" stroke="#2e9d4e" stroke-width="2.1"/>
<rect x="1206.5" y="82" width="49.8" height="39.5" stroke="#444" stroke-width="1.9"/>
<rect x="1203.9" y="79.4" width="5.2" height="5.2" fill="#2a8dd4"/>
<rect x="1203.9" y="118.9" width="5.2" height="5.2" fill="#2a8dd4"/>
<rect x="1253.7" y="79.4" width="5.2" height="5.2" fill="#2a8dd4"/>
<rect x="1253.7" y="118.9" width="5.2" height="5.2" fill="#2a8dd4"/>
<path d="M1221.7 113.8 L1231.2 89.6 L1240.7 113.8 M1225 105.8 H1237.4" stroke="#2a8dd4" stroke-width="2.1"/>
<path d="M1303.3 124.8 H1289 V98.2 H1303.3 M1303.3 118 V78.7 H1316 V103 M1316 87.3 H1330 V93 M1330 112 V124.8 H1317" stroke="#444" stroke-width="2"/>
<g transform="translate(1302.3 129) rotate(-42.1927970938468)"><path d="M0 0 L8 -4.3 L44.64546148375516 -4.3 Q49.14546148375516 -4.3 49.14546148375516 0 Q49.14546148375516 4.3 44.64546148375516 4.3 L8 4.3 Z" fill="#fafafa" stroke="#2a8dd4" stroke-width="1.9" stroke-linejoin="round"/><path d="M0 0 L8 -4.3 Q10.5 0 8 4.3 Z" fill="#83beec" stroke="#2a8dd4" stroke-width="1.5" stroke-linejoin="round"/><path d="M42.64546148375516 -4.3 V4.3" stroke="#2a8dd4" stroke-width="1.6"/></g>
<rect x="1411" y="78.7" width="31.4" height="46.1" fill="none" stroke="#444" stroke-width="2"/><rect x="1415.6" y="83.7" width="21.600000000000136" height="6.8" fill="#83beec" stroke="#0f6cbd" stroke-width="1.6"/><rect x="1415.1" y="95.1" width="5" height="5" fill="#444"/><rect x="1415.1" y="105.5" width="5" height="5" fill="#444"/><rect x="1415.1" y="115.9" width="5" height="5" fill="#444"/><rect x="1423.9" y="95.1" width="5" height="5" fill="#444"/><rect x="1423.9" y="105.5" width="5" height="5" fill="#444"/><rect x="1423.9" y="115.9" width="5" height="5" fill="#444"/><rect x="1432.7" y="95.1" width="5" height="5" fill="#444"/><rect x="1432.7" y="105.5" width="5" height="5" fill="#444"/><rect x="1432.7" y="115.9" width="5" height="5" fill="#444"/>
<rect x="1496" y="78.7" width="31.4" height="46.1" fill="none" stroke="#444" stroke-width="2"/><rect x="1505.5" y="83.7" width="17.0" height="6.8" fill="#c8c6c4" stroke="#8a8886" stroke-width="1.6"/><rect x="1500.3" y="95.1" width="5" height="5" fill="#444"/><rect x="1500.3" y="105.5" width="5" height="5" fill="#444"/><rect x="1500.3" y="115.9" width="5" height="5" fill="#444"/><rect x="1509.1" y="95.1" width="5" height="5" fill="#444"/><rect x="1509.1" y="105.5" width="5" height="5" fill="#444"/><rect x="1509.1" y="115.9" width="5" height="5" fill="#444"/><rect x="1517.9" y="95.1" width="5" height="5" fill="#444"/><rect x="1517.9" y="105.5" width="5" height="5" fill="#444"/><rect x="1517.9" y="115.9" width="5" height="5" fill="#444"/>
<path d="M1494.6 74.6 H1506.4 L1499.7 86.6 H1506.8 L1488.2 108.6 H1485.4 L1493.6 92.7 H1485.6 Z" fill="#fadc8c" stroke="#e07a10" stroke-width="1.7" stroke-linejoin="miter"/>
<path d="M1621 92 V82.5 Q1621 78.7 1625 78.7 H1633.5 Q1637.5 78.7 1637.5 82.5 V99" stroke="#444" stroke-width="2"/>
<path d="M1612.3 106 V96.5 Q1612.3 92.7 1616.3 92.7 H1624.5 Q1628.5 92.7 1628.5 96.5 V107 M1628.5 115 V124.8" stroke="#444" stroke-width="2"/>
<path d="M1620.2 124.8 V110.5 Q1620.2 106.7 1616.2 106.7 H1607.3 Q1603.3 106.7 1603.3 110.5 V121 Q1603.3 124.8 1607.3 124.8 H1635" stroke="#444" stroke-width="2"/>
<path d="M1637.9 129.6 V103 M1627.4 113.4 L1637.9 102.9 L1648.4 113.4" stroke="#2a8dd4" stroke-width="2"/>
</svg>
<div id="leftnav" class="abs"></div>
<div class="abs" style="left:0.00px;top:223.00px;width:5.00px;height:69.50px;background:#117865;"></div>
<svg class="abs" style="left:20px;top:240px" width="34" height="34" viewBox="20 240 34 34" fill="none" stroke="#000" stroke-width="1.7"><path d="M25 245.5 V268.2 H47.6"/><rect x="28.6" y="249.3" width="3.2" height="14.2"/><rect x="35.4" y="252.8" width="3.2" height="10.7"/><rect x="42.6" y="247" width="3.2" height="16.5"/></svg>
<svg class="abs" style="left:20px;top:308px" width="34" height="34" viewBox="20 308 34 34" fill="none" stroke="#605e5c" stroke-width="1.6"><rect x="23.6" y="313.4" width="26" height="24.8"/><path d="M23.6 316.2H49.6" stroke-width="2.2"/><path d="M23.6 323.4H49.6 M23.6 330.8H49.6 M32.1 316.2V338.2 M41.1 316.2V338.2"/></svg>
<svg class="abs" style="left:18px;top:376px" width="38" height="40" viewBox="18 376 38 40" fill="none" stroke="#605e5c" stroke-width="1.6"><rect x="38.8" y="381.2" width="12.6" height="11.8"/><path d="M38.8 384.8H51.4"/><rect x="21.8" y="388.8" width="10.8" height="13.4"/><path d="M21.8 392.4H32.6"/><rect x="38.8" y="398.6" width="12.6" height="12.4"/><path d="M38.8 402.2H51.4"/><path d="M28.6 388.8 V384.6 H38.8 M28.6 402.2 V406.8 H38.8"/></svg>
<svg class="abs" style="left:16px;top:448px" width="38" height="36" viewBox="16 448 38 36" fill="none" stroke="#605e5c" stroke-width="1.6"><path d="M27 469.5 V455.8 Q27 452.8 30 452.8 H37.6 L44 459.2 V472"/><path d="M37.6 452.8 V459.2 H44"/><path d="M47.2 462.5 V470.5 Q47 477.6 41.5 478.2"/></svg>
<div class="t" style="left:18.8px;top:469.6px;font-size:11.6px;font-weight:bold;color:#605e5c;letter-spacing:-.35px">DAX</div>
<svg class="abs" style="left:20px;top:518px" width="34" height="24" viewBox="20 518 34 24" fill="none" stroke="#605e5c" stroke-width="1.6"><path d="M27 538 V525 Q27 522 30 522 H39 L45.6 528.6 V538"/><path d="M39 522 V528.6 H45.6"/></svg>
<div class="t" style="left:20.2px;top:539.2px;font-size:11.7px;font-weight:bold;color:#605e5c">TMDL</div>
<div class="abs" style="left:2381.00px;top:223.00px;width:1.20px;height:1135.00px;background:#a19f9d;"></div>
<div class="abs" style="left:2382.20px;top:223.00px;width:56.00px;height:1135.00px;background:#fff;"></div>
<div class="abs" style="left:2437.80px;top:223.00px;width:2.00px;height:1196.00px;background:#e4e2e0;"></div>
<div class="abs" style="left:2498.80px;top:223.00px;width:2.00px;height:1196.00px;background:#e4e2e0;"></div>
<svg class="abs" style="left:2397.6px;top:243.2px" width="27" height="26" viewBox="-2 -2 27 26" fill="none" stroke="#252423" stroke-width="1.9"><path d="M11.4 0.6 L0.9 10.7 L11.4 20.8 M20.8 0.6 L10.3 10.7 L20.8 20.8"/></svg>
<svg class="abs" style="left:2456.6px;top:244px" width="27" height="26" viewBox="-2 -2 27 26" fill="none" stroke="#252423" stroke-width="1.9"><path d="M11.4 0.6 L0.9 10.7 L11.4 20.8 M20.8 0.6 L10.3 10.7 L20.8 20.8"/></svg>
<svg class="abs" style="left:2517.8px;top:244px" width="27" height="26" viewBox="-2 -2 27 26" fill="none" stroke="#252423" stroke-width="1.9"><path d="M11.4 0.6 L0.9 10.7 L11.4 20.8 M20.8 0.6 L10.3 10.7 L20.8 20.8"/></svg>
<svg class="abs" style="left:2400px;top:290px" width="28" height="30" viewBox="2400 290 28 30" fill="none" stroke="#252423" stroke-width="1.8" stroke-linejoin="miter"><path d="M2422.1 295.8 V315.5 L2412.8 307.6 H2405.2 V303.4 H2412.8 Z"/></svg>
<div class="t" style="left:2409.5px;top:368px;font-size:27.5px;color:#252423;-webkit-text-stroke:.35px #252423;transform:translate(-50%,-50%) rotate(90deg)">Filters</div>
<div class="t" style="left:2466.8px;top:376.6px;font-size:27.5px;color:#252423;-webkit-text-stroke:.35px #252423;transform:translate(-50%,-50%) rotate(90deg)">Visualizations</div>
<div class="t" style="left:2527.4px;top:321.6px;font-size:27.5px;color:#252423;-webkit-text-stroke:.35px #252423;transform:translate(-50%,-50%) rotate(90deg)">Data</div>
<div class="abs" style="left:71.00px;top:1358.00px;width:2367.00px;height:61.00px;background:#f3f2f1;"></div>
<svg class="abs" style="left:88px;top:1364px" width="46" height="34" viewBox="88 1364 46 34" fill="none" stroke="#605e5c" stroke-width="1.8"><rect x="93.4" y="1371.2" width="30.6" height="17.3"/><path d="M108.7 1388.5 V1393 M103.2 1393.1 H114.1"/></svg>
<div class="abs" style="left:88.80px;top:1405.70px;width:41.90px;height:5.30px;background:#117865;border-radius:2.7px"></div>
<svg class="abs" style="left:172px;top:1362px" width="30" height="42" viewBox="172 1362 30 42" fill="none" stroke="#605e5c" stroke-width="1.8"><rect x="176.5" y="1367.2" width="19.7" height="32.2" rx="2.4"/><path d="M184 1395 H188.7" stroke-width="2"/></svg>
<svg class="abs" style="left:234.5px;top:1381.3px" width="7.6" height="14.2" viewBox="0 0 8 14"><path d="M8 0 L0 7 L8 14Z" fill="#c8c6c4"/></svg>
<svg class="abs" style="left:273.2px;top:1381.3px" width="7.6" height="14.2" viewBox="0 0 8 14"><path d="M0 0 L8 7 L0 14Z" fill="#c8c6c4"/></svg>
<div class="abs" style="left:292.50px;top:1358.00px;width:1.20px;height:61.00px;background:#b3b0ad;"></div>
<div class="abs" style="left:293.70px;top:1358.00px;width:244.80px;height:61.00px;background:#fff;"></div>
<div class="abs" style="left:293.70px;top:1412.00px;width:244.80px;height:7.00px;background:#117865;"></div>
<div class="abs" style="left:538.00px;top:1358.00px;width:1.20px;height:61.00px;background:#c8c6c4;"></div>
<div class="abs" style="left:539.20px;top:1358.00px;width:199.00px;height:61.00px;background:#fff;"></div>
<div class="abs" style="left:738.20px;top:1358.00px;width:68.00px;height:61.00px;background:#117865;"></div>
<div class="t" style="top:1379.44px;font-size:21.1px;color:#252423;left:416.00px;transform:translateX(-50%);-webkit-text-stroke:.55px #252423;">Income Statement</div>
<div class="t" style="top:1380.54px;font-size:19.8px;color:#252423;left:637.80px;transform:translateX(-50%);">Balance Sheet</div>
<div class="t" style="top:1366.11px;font-size:17px;color:#252423;font-weight:bold;left:524.50px;transform:translateX(-50%);">x</div>
<svg class="abs" style="left:761px;top:1377px" width="21" height="21" viewBox="0 0 21 21"><path d="M10.5 1 V20 M1 10.5 H20" stroke="#fff" stroke-width="4.2"/></svg>
<div class="abs" style="left:0.00px;top:1419.00px;width:2560.00px;height:1.20px;background:#e1dfdd;"></div>
<div class="t" style="top:1432.07px;font-size:20px;color:#444;left:7.50px;">Page 1 of 2</div>
<div class="t" style="top:1426.68px;font-size:24px;color:#605e5c;font-weight:bold;left:2195.00px;transform:translateX(-50%);">-</div>
<div class="abs" style="left:2207.50px;top:1439.50px;width:174.00px;height:2.10px;background:#605e5c;"></div>
<div class="abs" style="left:2280.50px;top:1431.50px;width:7.20px;height:19.00px;background:#605e5c;"></div>
<div class="abs" style="left:2293.60px;top:1434.60px;width:1.70px;height:10.60px;background:#605e5c;"></div>
<svg class="abs" style="left:2390px;top:1433px" width="15" height="15" viewBox="0 0 15 15"><path d="M7.5 1 V14 M1 7.5 H14" stroke="#605e5c" stroke-width="2.6"/></svg>
<div class="t" style="top:1430.67px;font-size:20px;color:#605e5c;left:2447.60px;transform:translateX(-50%);">89%</div>
<svg class="abs" style="left:2501px;top:1430.3px" width="27.6" height="20.3" viewBox="0 0 30 22" fill="none" stroke="#605e5c" stroke-width="1.6"><rect x="1" y="1" width="28" height="20"/><path d="M5.5 10 V5.5 H10.5 M19.5 5.5 H24.5 V10 M24.5 12.5 V16.5 H19.5 M10.5 16.5 H5.5 V12.5" stroke-width="1.9"/></svg>
<div class="t" style="top:1314.17px;font-size:35px;color:rgba(120,120,120,.37);left:2056.00px;">Activate Windows</div>
<div class="t" style="top:1359.45px;font-size:25.1px;color:rgba(120,120,120,.37);left:2055.00px;">Go to Settings to activate Windows.</div>
<div class="abs ribshadow2" style="left:0;width:71px"></div><div class="abs ribshadow2" style="left:2382px;width:178px"></div>
</body></html>
